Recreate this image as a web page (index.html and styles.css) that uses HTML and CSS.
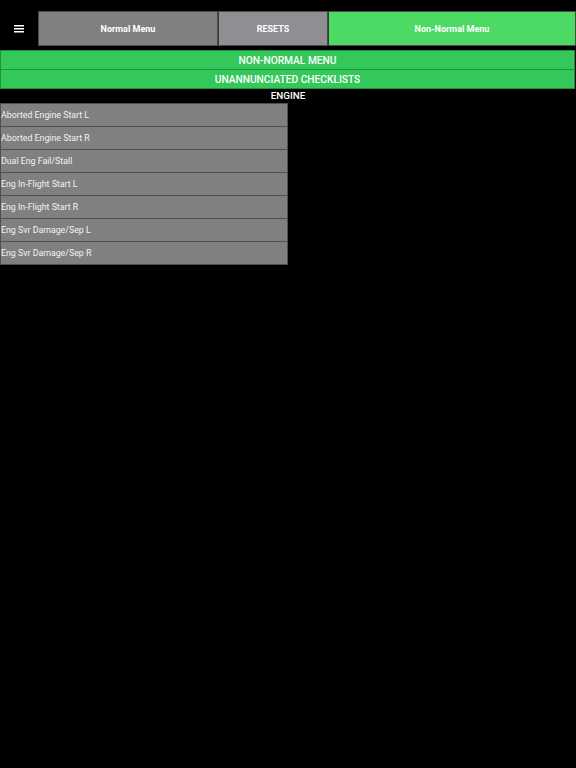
FILE: index.html
```html
<!DOCTYPE html>
<html>
<head>
<meta charset="utf-8">
<link rel="stylesheet" href="styles.css">
</head>
<body>
<div class="topbar">
  <div class="menu-cell">
    <svg class="hamburger" width="10" height="8" viewBox="0 0 10 8">
      <rect x="0" y="0" width="10" height="1.5" fill="#fff"/>
      <rect x="0" y="3" width="10" height="1.5" fill="#fff"/>
      <rect x="0" y="6" width="10" height="1.5" fill="#fff"/>
    </svg>
  </div>
  <div class="tab tab-normal">Normal Menu</div>
  <div class="tab tab-resets">RESETS</div>
  <div class="tab tab-nonnormal">Non-Normal Menu</div>
</div>
<div class="bars">
  <div class="bar">NON-NORMAL MENU</div>
  <div class="bar">UNANNUNCIATED CHECKLISTS</div>
</div>
<div class="section-title">ENGINE</div>
<div class="list">
  <div class="row">Aborted Engine Start L</div>
  <div class="row">Aborted Engine Start R</div>
  <div class="row">Dual Eng Fail/Stall</div>
  <div class="row">Eng In-Flight Start L</div>
  <div class="row">Eng In-Flight Start R</div>
  <div class="row">Eng Svr Damage/Sep L</div>
  <div class="row">Eng Svr Damage/Sep R</div>
</div>
</body>
</html>
```
FILE: styles.css
```css
html, body {
  margin: 0;
  padding: 0;
  background: #000;
  font-family: Roboto, "Liberation Sans", Arial, sans-serif;
  color: #fff;
}
.topbar {
  display: flex;
  padding-top: 11px;
  box-sizing: border-box;
  height: 46px;
}
.menu-cell {
  flex: 0 0 38px;
  display: flex;
  align-items: center;
  justify-content: center;
}
.hamburger {
  display: block;
}
.tab {
  display: flex;
  align-items: center;
  justify-content: center;
  font-size: 9px;
  font-weight: bold;
  color: #fff;
  box-sizing: border-box;
  border: 1px solid #4a4a4a;
  height: 35px;
}
.tab-normal {
  flex: 0 0 180px;
  background: #808080;
}
.tab-resets {
  flex: 0 0 110px;
  background: #8e8e93;
  border-left: 1px solid #3a3a3a;
}
.tab-nonnormal {
  flex: 1 1 auto;
  background: #4cd964;
  border-left: 1px solid #3a3a3a;
}
.bars {
  margin-top: 4px;
  display: flex;
  flex-direction: column;
}
.bar {
  height: 20px;
  box-sizing: border-box;
  background: #34c759;
  border: 1px solid #22913f;
  margin-right: 1px;
  display: flex;
  align-items: center;
  justify-content: center;
  font-size: 10.2px;
  font-weight: 500;
  color: #fff;
}
.bar + .bar {
  margin-top: -1px;
}
.section-title {
  height: 14px;
  font-size: 9.8px;
  font-weight: 500;
  line-height: 13px;
  text-align: center;
  color: #fff;
}
.list {
  width: 288px;
  display: flex;
  flex-direction: column;
}
.row {
  height: 24px;
  box-sizing: border-box;
  background: #808080;
  border: 1px solid #4f4f4f;
  display: flex;
  align-items: center;
  padding: 0 0 1px 0;
  font-size: 8.8px;
  color: #f2f2f2;
}
.row + .row {
  margin-top: -1px;
}
```
